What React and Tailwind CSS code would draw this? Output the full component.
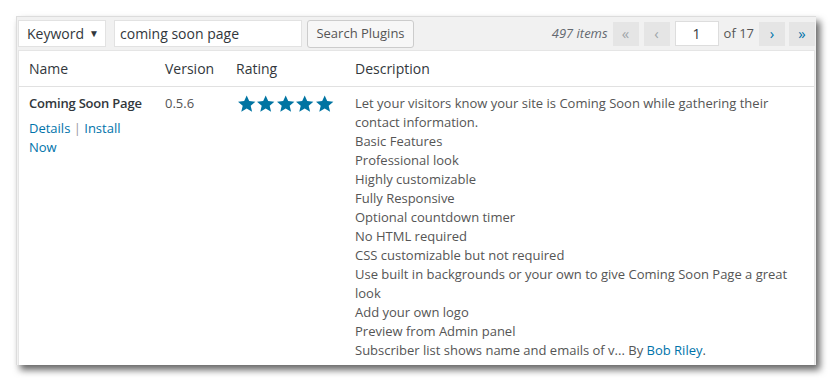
import React from 'react';

const lines = [
  'Let your visitors know your site is Coming Soon while gathering their',
  'contact information.',
  'Basic Features',
  'Professional look',
  'Highly customizable',
  'Fully Responsive',
  'Optional countdown timer',
  'No HTML required',
  'CSS customizable but not required',
  'Use built in backgrounds or your own to give Coming Soon Page a great',
  'look',
  'Add your own logo',
  'Preview from Admin panel',
];

const Star = () => (
  <svg width="19.4" height="18" viewBox="0 0 24 23" className="block">
    <path d="M12 0.5l3.2 7.3 7.9.7-6 5.2 1.8 7.8L12 17.4l-6.9 4.1 1.8-7.8-6-5.2 7.9-.7z" fill="#0074a2" />
  </svg>
);

const PageBtn = ({ children, active }) => (
  <span className={`w-[26px] h-[24px] flex items-center justify-center bg-[#e5e5e5] text-[15px] ${active ? 'text-[#0073aa]' : 'text-[#a0a5aa]'}`}>{children}</span>
);

export default function App() {
  return (
    <div className="w-[835px] h-[382px] bg-white font-['Open_Sans',sans-serif] pt-[16px] pl-[16px]">
      <div className="w-[800px] h-[349px] bg-[#f1f1f1] border-t border-l border-[#dcdcdc] shadow-[4px_5px_7px_rgba(0,0,0,0.6)] overflow-hidden">
        <div className="h-[33px] flex items-center pl-[1px] pr-[1px]">
          <div className="w-[88px] h-[27px] bg-white border border-[#e2e2e2] flex items-center justify-between pl-[8px] pr-[6px] text-[14px] text-[#32373c]">
            <span>Keyword</span>
            <span className="text-[10px]">▼</span>
          </div>
          <div className="ml-[8px] w-[188px] h-[27px] bg-white border border-[#e2e2e2] flex items-center pl-[5px] text-[14px] text-[#32373c]">coming soon page</div>
          <div className="ml-[5px] w-[107px] h-[28px] bg-[#f7f7f7] border border-[#cccccc] rounded-[3px] flex items-center justify-center text-[13px] text-[#555]">Search Plugins</div>
          <div className="ml-auto flex items-center">
            <span className="italic text-[13px] text-[#646970] mr-[5px]">497 items</span>
            <PageBtn>«</PageBtn>
            <span className="w-[5px]" />
            <PageBtn>‹</PageBtn>
            <span className="ml-[5px] w-[44px] h-[25px] bg-white border border-[#dddddd] flex items-center justify-center text-[14px] text-[#32373c]">1</span>
            <span className="ml-[5px] text-[13px] text-[#555]">of 17</span>
            <span className="w-[5px]" />
            <PageBtn active>›</PageBtn>
            <span className="w-[4px]" />
            <PageBtn active>»</PageBtn>
          </div>
        </div>
        <div className="ml-[1px] w-[797px] h-[316px] bg-white border border-[#e5e5e5]">
          <div className="h-[36px] flex items-center border-b border-[#e1e1e1] text-[14px] text-[#32373c]">
            <span className="w-[146px] pl-[10px]">Name</span>
            <span className="w-[71px]">Version</span>
            <span className="w-[119px]">Rating</span>
            <span>Description</span>
          </div>
          <div className="flex pt-[7px] text-[13px] leading-[19px] text-[#555]">
            <div className="w-[146px] pl-[10px] pr-[22px]">
              <div className="font-semibold text-[#32373c] whitespace-nowrap tracking-[-0.2px]">Coming Soon Page</div>
              <div className="mt-[6px] text-[#0073aa]">Details <span className="text-[#999]">|</span> Install Now</div>
            </div>
            <div className="w-[72px]">0.5.6</div>
            <div className="w-[118px] flex pt-[1px]">
              <Star /><Star /><Star /><Star /><Star />
            </div>
            <div>
              {lines.map((l, i) => <div key={i}>{l}</div>)}
              <div>Subscriber list shows name and emails of v... By <span className="text-[#0073aa]">Bob Riley</span>.</div>
            </div>
          </div>
        </div>
      </div>
    </div>
  );
}
